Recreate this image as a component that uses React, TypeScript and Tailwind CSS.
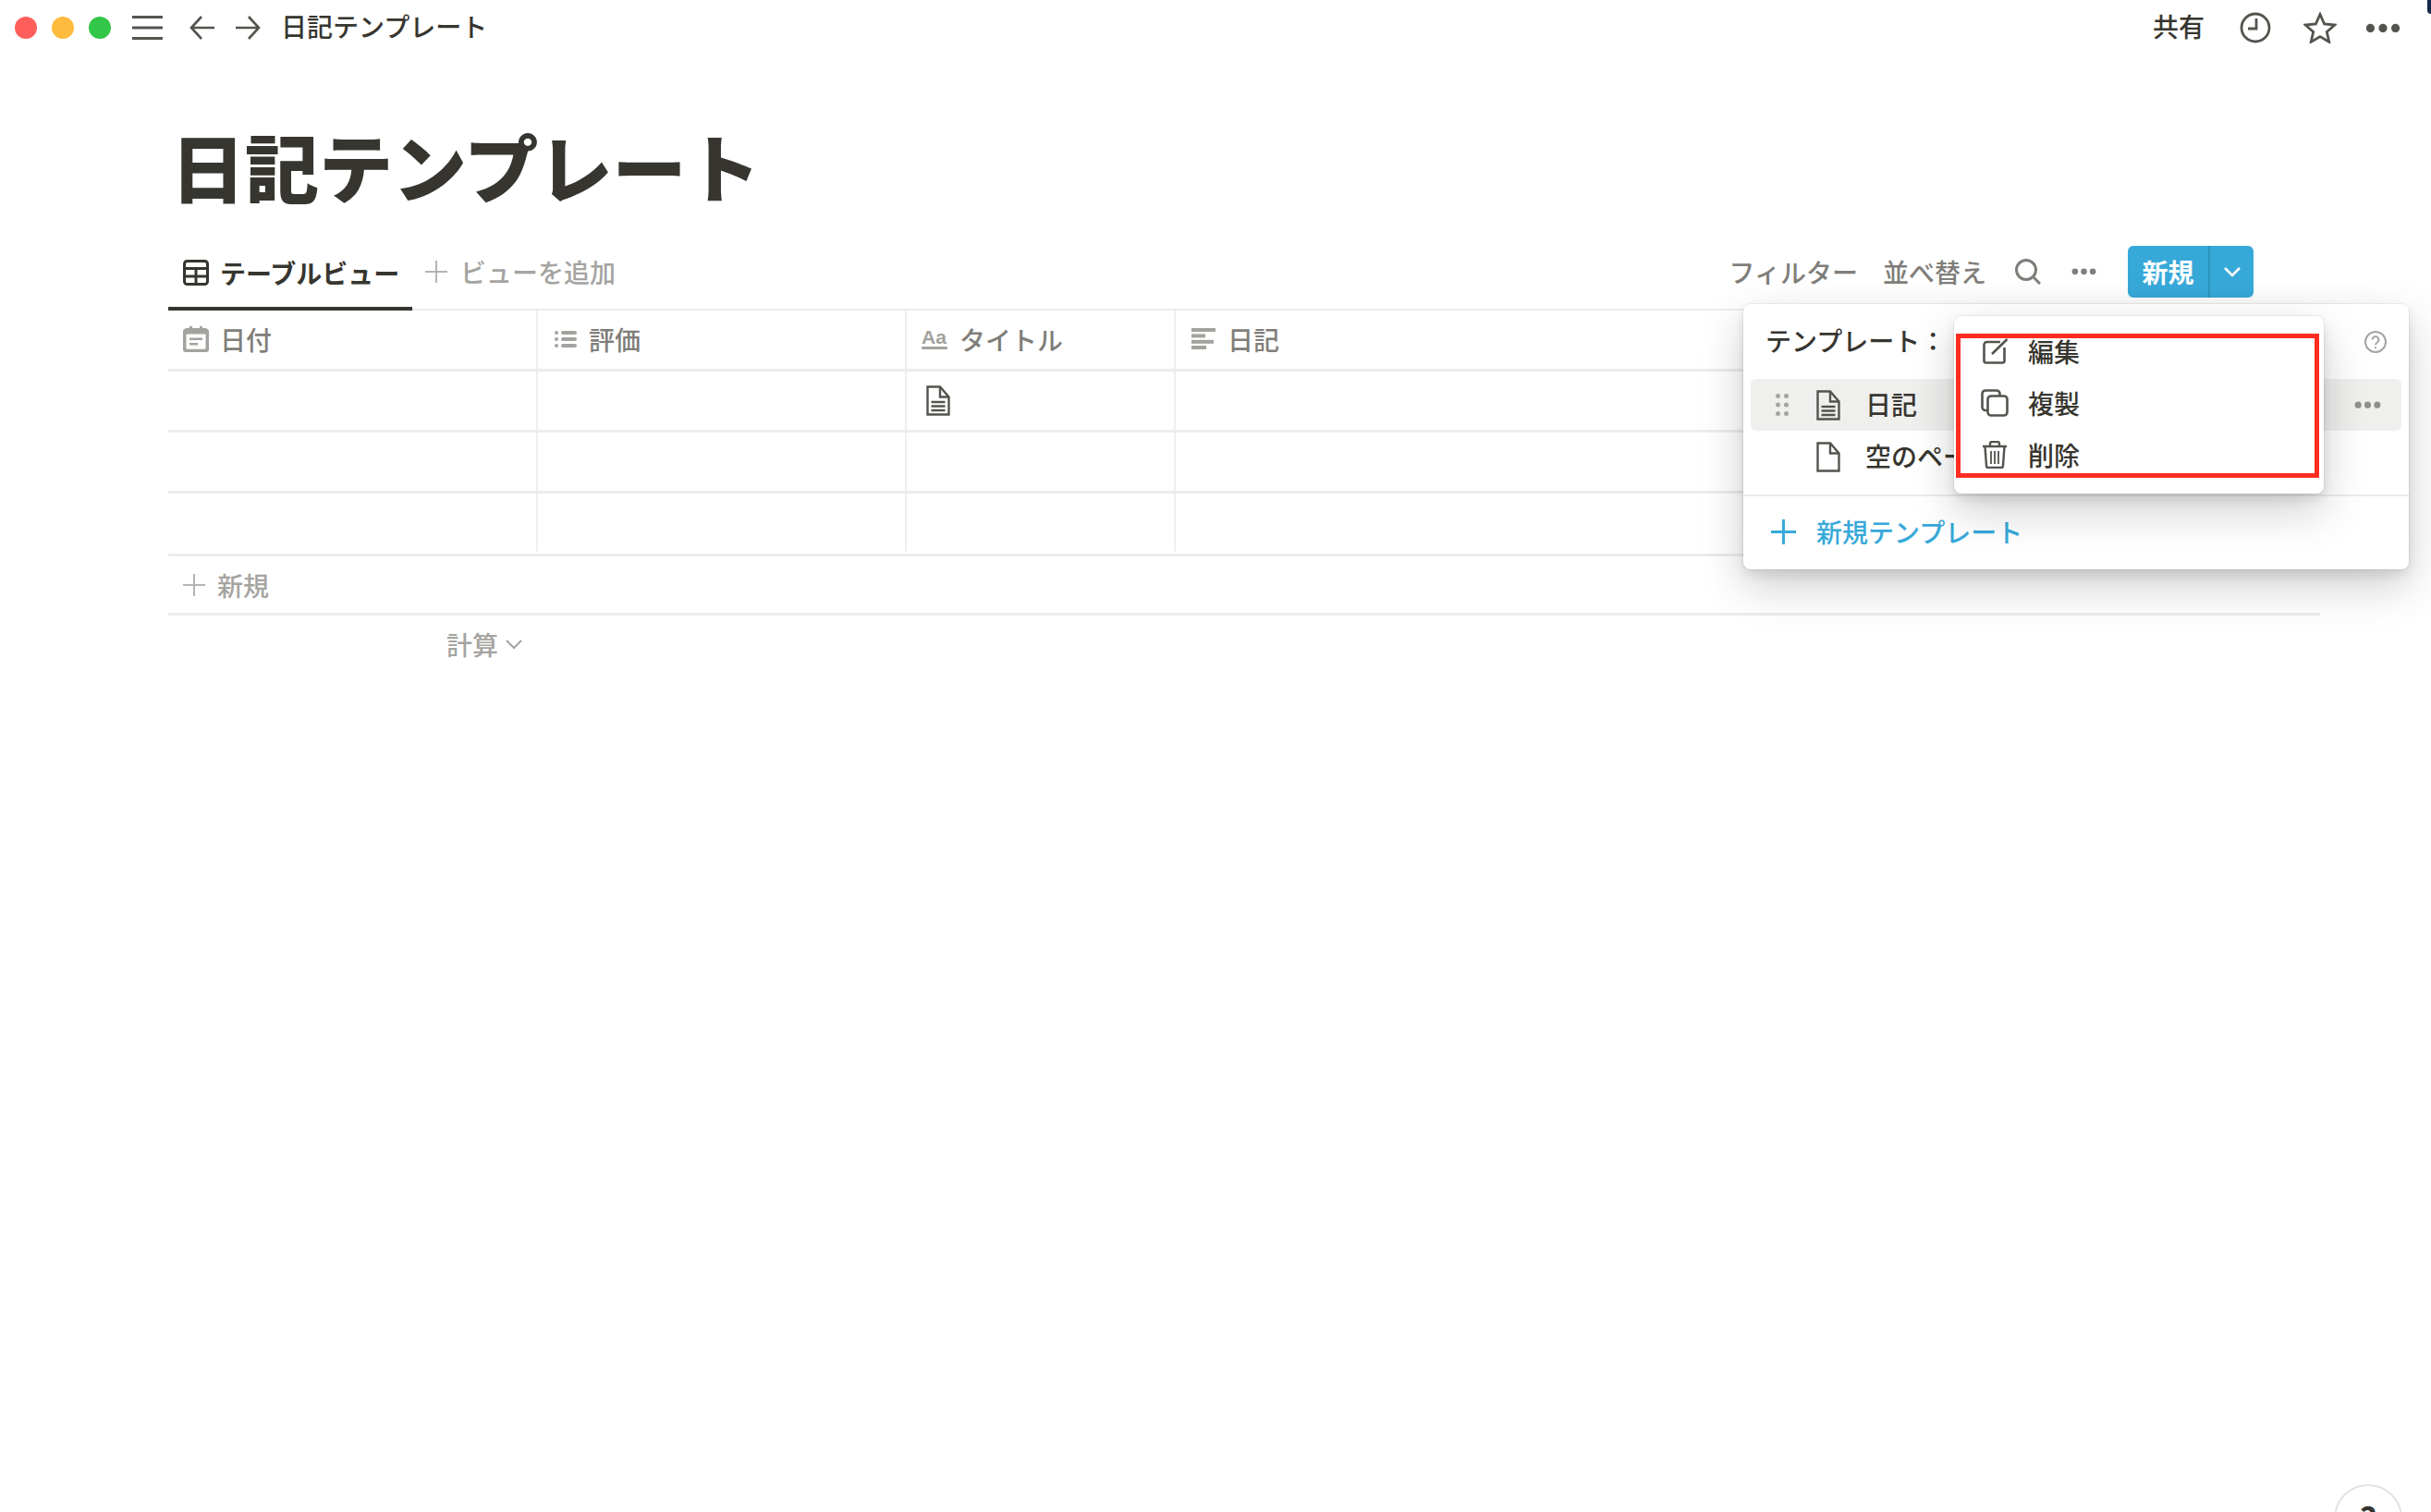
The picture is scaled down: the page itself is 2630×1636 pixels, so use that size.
const jp = "font-['Noto_Sans_CJK_JP','Noto_Sans',sans-serif]";

function PlusIcon({ size, width, color }: { size: number; width: number; color: string }) {
  return (
    <svg viewBox="0 0 24 24" width={size} height={size} className="shrink-0" fill="none" stroke={color} strokeWidth={width}>
      <path d="M0 12h24M12 0v24" />
    </svg>
  );
}

function ChevronIcon({ width, color }: { width: number; color: string }) {
  return (
    <svg viewBox="0 0 18 11" className="w-[18px] h-[11px] shrink-0" fill="none" stroke={color} strokeWidth={width}>
      <path d="M1 1l8 8 8-8" />
    </svg>
  );
}

function TableIcon() {
  return (
    <svg viewBox="0 0 28 28" className="w-[28px] h-[28px] shrink-0" fill="none" stroke="#37352f" strokeWidth="3">
      <rect x="1.5" y="1.5" width="25" height="25" rx="3" />
      <path d="M1.5 9.5h25M1.5 18h25M14 9.5v17" />
    </svg>
  );
}

function DotsIcon({ color, size }: { color: string; size: number }) {
  return (
    <svg viewBox="0 0 28 8" width={size} height={(size * 8) / 28} fill={color}>
      <circle cx="4" cy="4" r="3.4" />
      <circle cx="14" cy="4" r="3.4" />
      <circle cx="24" cy="4" r="3.4" />
    </svg>
  );
}

function DocIcon({ lines, className }: { lines?: boolean; className: string }) {
  return (
    <svg viewBox="0 0 26 33" className={className} fill="none" stroke="#55534e" strokeWidth="2.4">
      <path d="M1.5 1.5H15L24.5 12.5V31.5H1.5z" />
      <path d="M15 1.5V12.5H24.5" />
      {lines && <path d="M5.5 18H20.5M5.5 22.5H20.5M5.5 27H20.5" strokeWidth="2.4" />}
    </svg>
  );
}

function DateIcon() {
  return (
    <svg viewBox="0 0 28 28" className="w-[28px] h-[28px] shrink-0" fill="#a3a29e">
      <path d="M5 2h2V0h3v2h8V0h3v2h2a5 5 0 0 1 5 3v20a3 3 0 0 1-3 3H3a3 3 0 0 1-3-3V5a5 5 0 0 1 5-3z" />
      <path d="M3.5 8.5h21V24a.8.8 0 0 1-.8.8H4.3a.8.8 0 0 1-.8-.8z" fill="#fff" />
      <path d="M7 12.5h14v2.6H7zM7 18h9v2.6H7z" />
    </svg>
  );
}

function ListIcon() {
  return (
    <svg viewBox="0 0 24 20" className="w-[24px] h-[20px] shrink-0" fill="#a3a29e">
      <circle cx="2" cy="3" r="2" />
      <circle cx="2" cy="10" r="2" />
      <circle cx="2" cy="17" r="2" />
      <rect x="7" y="1" width="17" height="4" rx="2" />
      <rect x="7" y="8" width="17" height="4" rx="2" />
      <rect x="7" y="15" width="17" height="4" rx="2" />
    </svg>
  );
}

function TextIcon() {
  return (
    <svg viewBox="0 0 28 23" className="w-[28px] h-[23px] shrink-0" fill="#a3a29e">
      <text x="0" y="17" fontFamily="Liberation Sans, sans-serif" fontWeight="700" fontSize="21">
        Aa
      </text>
      <rect y="20" width="28" height="3" rx="1" />
    </svg>
  );
}

function LinesIcon() {
  return (
    <svg viewBox="0 0 26 23" className="w-[26px] h-[23px] shrink-0" fill="#a3a29e">
      <rect y="0" width="26" height="4" />
      <rect y="6.4" width="15" height="4" />
      <rect y="12.8" width="24" height="4" />
      <rect y="19" width="16" height="4" />
    </svg>
  );
}

function Column({ className, icon, label }: { className: string; icon: React.ReactNode; label: string }) {
  return (
    <div className={`${className} shrink-0 h-full pb-[2px] flex items-center`}>
      {icon}
      <span className="text-[28px] font-medium text-[#7f7e7a]">{label}</span>
    </div>
  );
}

function Row({ children, last }: { children?: React.ReactNode; last?: boolean }) {
  return (
    <div className={last ? "h-[63px] mb-[2px] flex" : "h-[66px] flex border-b-[3px] border-[#ececeb]"}>
      <div className="w-[400px] shrink-0 border-r-2 border-[#efefee]" />
      <div className="w-[399px] shrink-0 border-r-2 border-[#efefee]" />
      <div className="w-[291px] shrink-0 border-r-2 border-[#efefee] flex items-center pl-[21px]">{children}</div>
    </div>
  );
}

function MenuItem({ icon, label }: { icon: React.ReactNode; label: string }) {
  return (
    <div className="h-[56px] flex items-center pl-[29px] gap-[21px]">
      <div className="w-[30px] flex justify-center">{icon}</div>
      <span className="text-[28px] font-medium text-[#37352f] leading-none">{label}</span>
    </div>
  );
}

export default function App() {
  return (
    <div className={`relative w-[2630px] h-[1636px] overflow-hidden bg-white ${jp}`}>
      {/* Title bar */}
      <div className="h-[60px] flex items-center pl-[16px] pr-[33px]">
        <div className="flex gap-[16px]">
          <div className="w-[24px] h-[24px] rounded-full bg-[#ff5f5b]" />
          <div className="w-[24px] h-[24px] rounded-full bg-[#febb3e]" />
          <div className="w-[24px] h-[24px] rounded-full bg-[#32c748]" />
        </div>
        <svg viewBox="0 0 33 26" className="w-[33px] h-[26px] ml-[23px]" fill="#55534e">
          <rect width="33" height="3" />
          <rect y="11.5" width="33" height="3" />
          <rect y="23" width="33" height="3" />
        </svg>
        <svg viewBox="0 0 28 26" className="w-[28px] h-[26px] ml-[29px]" fill="none" stroke="#55534e" strokeWidth="2.6">
          <path d="M27 13H3M13 1 2 13l11 12" />
        </svg>
        <svg viewBox="0 0 28 26" className="w-[28px] h-[26px] ml-[21px]" fill="none" stroke="#55534e" strokeWidth="2.6">
          <path d="M1 13h24M15 1l11 12-11 12" />
        </svg>
        <span className="ml-[22px] mb-[4px] text-[28px] font-medium text-[#37352f]">日記テンプレート</span>
        <div className="ml-auto flex items-center">
          <span className="mb-[4px] text-[28px] font-medium text-[#37352f]">共有</span>
          <svg viewBox="0 0 34 34" className="w-[34px] h-[34px] ml-[38px]" fill="none" stroke="#55534e" strokeWidth="2.8">
            <circle cx="17" cy="17" r="15" />
            <path d="M18 7v11H9" />
          </svg>
          <svg viewBox="0 0 36 34" className="w-[36px] h-[34px] ml-[35px]" fill="none" stroke="#55534e" strokeWidth="2.8">
            <path d="M18 2.5l4.6 10.4 11.2 1.1-8.5 7.4 2.5 11-9.8-5.8-9.8 5.8 2.5-11L2.2 14l11.2-1.1z" />
          </svg>
          <div className="ml-[31px]">
            <DotsIcon color="#55534e" size={38} />
          </div>
        </div>
      </div>

      {/* Page body */}
      <div className="pl-[182px] pr-[120px]">
        <h1 className="mt-[78px] pl-[3px] text-[80px] leading-[80px] font-black text-[#37352f]">日記テンプレート</h1>

        <div className="mt-[50px] h-[68px] flex items-stretch border-b-2 border-[#ececeb]">
          <div className="w-[264px] h-[68px] pl-[16px] pb-[10px] flex items-center gap-[12px] border-b-4 border-[#37352f]">
            <TableIcon />
            <span className="text-[28px] font-bold text-[#37352f]">テーブルビュー</span>
          </div>
          <div className="ml-[14px] flex items-center gap-[14px] pb-[14px] text-[#a5a4a1]">
            <PlusIcon size={24} width={2} color="#b5b4b1" />
            <span className="text-[28px] font-medium">ビューを追加</span>
          </div>
          <div className="ml-auto flex items-center pb-[14px] pr-[72px]">
            <span className="text-[28px] font-medium text-[#7f7e7a]">フィルター</span>
            <span className="ml-[27px] text-[28px] font-medium text-[#7f7e7a]">並べ替え</span>
            <svg viewBox="0 0 28 28" className="w-[28px] h-[28px] ml-[31px]" fill="none" stroke="#7f7e7a" strokeWidth="3">
              <circle cx="12" cy="12" r="10.5" />
              <path d="M19.5 19.5 27 27" />
            </svg>
            <div className="ml-[33px]">
              <DotsIcon color="#7f7e7a" size={27} />
            </div>
            <div className="ml-[34px] w-[136px] h-[56px] rounded-[6px] bg-[#37a9d9] flex">
              <div className="w-[89px] flex items-center justify-center border-r-2 border-[#2c93bf] text-[28px] font-bold text-white">
                新規
              </div>
              <div className="flex-1 flex items-center justify-center">
                <ChevronIcon width={2.6} color="#fff" />
              </div>
            </div>
          </div>
        </div>

        {/* Table */}
        <div className="h-[66px] flex border-b-[3px] border-[#ececeb]">
          <Column className="w-[400px] pl-[16px] gap-[12px] border-r-2 border-[#efefee]" icon={<DateIcon />} label="日付" />
          <Column className="w-[399px] pl-[18px] gap-[13px] border-r-2 border-[#efefee]" icon={<ListIcon />} label="評価" />
          <Column className="w-[291px] pl-[16px] gap-[13px] border-r-2 border-[#efefee]" icon={<TextIcon />} label="タイトル" />
          <Column className="w-[300px] pl-[17px] gap-[13px]" icon={<LinesIcon />} label="日記" />
        </div>
        <Row>
          <DocIcon lines className="w-[26px] h-[33px]" />
        </Row>
        <Row />
        <Row last />
        <div className="border-t-[3px] h-[67px] flex items-center gap-[13px] pl-[16px] border-b-[3px] border-[#ececeb] text-[#a5a4a1]">
          <PlusIcon size={24} width={2} color="#b5b4b1" />
          <span className="text-[28px] font-medium">新規</span>
        </div>
        <div className="h-[62px] pl-[301px] flex items-center gap-[8px] text-[#a5a4a1]">
          <span className="text-[28px] font-medium">計算</span>
          <ChevronIcon width={2} color="#a5a4a1" />
        </div>
      </div>

      {/* Template popup */}
      <div className="absolute left-[1886px] top-[329px] w-[720px] h-[287px] rounded-[8px] bg-white shadow-[0_0_0_1px_rgba(15,15,15,0.05),0_6px_12px_rgba(15,15,15,0.1),0_18px_48px_rgba(15,15,15,0.2)]">
        <div className="h-[81px] pl-[24px] pr-[24px] flex items-center justify-between">
          <span className="mb-[3px] text-[28px] font-medium text-[#37352f]">テンプレート：</span>
          <svg viewBox="0 0 24 24" className="w-[24px] h-[24px]" fill="none" stroke="#a5a4a1" strokeWidth="2">
            <circle cx="12" cy="12" r="11" />
            <path d="M8.5 9.5a3.5 3.5 0 1 1 5.4 3c-1.2.8-1.9 1.4-1.9 2.8M12 17.2v2" />
          </svg>
        </div>
        <div className="mx-[8px] h-[56px] rounded-[6px] bg-[#efefee] flex items-center pl-[27px] pr-[22px]">
          <svg viewBox="0 0 14 24" className="w-[14px] h-[24px]" fill="#a5a4a1">
            <circle cx="2.5" cy="2.5" r="2.5" />
            <circle cx="11.5" cy="2.5" r="2.5" />
            <circle cx="2.5" cy="12" r="2.5" />
            <circle cx="11.5" cy="12" r="2.5" />
            <circle cx="2.5" cy="21.5" r="2.5" />
            <circle cx="11.5" cy="21.5" r="2.5" />
          </svg>
          <DocIcon lines className="ml-[30px] w-[26px] h-[33px]" />
          <span className="ml-[27px] mb-[2px] text-[28px] font-medium text-[#37352f]">日記</span>
          <div className="ml-auto">
            <DotsIcon color="#8f8e8a" size={29} />
          </div>
        </div>
        <div className="h-[56px] flex items-center pl-[79px]">
          <DocIcon className="w-[26px] h-[33px]" />
          <span className="ml-[27px] mb-[2px] text-[28px] font-medium text-[#37352f] whitespace-nowrap">空のページ</span>
        </div>
        <div className="mt-[13px] border-t-2 border-[#ececeb] h-[79px] flex items-center pl-[30px] text-[#37a9d9]">
          <PlusIcon size={27} width={2.6} color="#37a9d9" />
          <span className="ml-[22px] mb-[2px] text-[28px] font-medium">新規テンプレート</span>
        </div>
      </div>

      {/* Item menu */}
      <div className="absolute left-[2114px] top-[342px] w-[400px] h-[192px] rounded-[8px] bg-white pt-[10px] shadow-[0_0_0_1px_rgba(15,15,15,0.05),0_6px_12px_rgba(15,15,15,0.1),0_18px_48px_rgba(15,15,15,0.2)]">
        <MenuItem
          label="編集"
          icon={
            <svg viewBox="0 0 28 28" className="w-[28px] h-[28px] ml-[2px]" fill="none" stroke="#55534e" strokeWidth="2.6">
              <path d="M19 4H4.5A3 3 0 0 0 1.5 7v17.5a2 2 0 0 0 2 2h18a2 2 0 0 0 2-2V10M10 17 26.5 1" />
            </svg>
          }
        />
        <MenuItem
          label="複製"
          icon={
            <svg viewBox="0 0 30 30" className="w-[30px] h-[30px]" fill="none" stroke="#55534e" strokeWidth="2.6">
              <rect x="7.5" y="7.5" width="21" height="21" rx="3.5" />
              <path d="M7.5 23H5a3.5 3.5 0 0 1-3.5-3.5V5A3.5 3.5 0 0 1 5 1.5h12A3.5 3.5 0 0 1 20.5 5v2.5" />
            </svg>
          }
        />
        <MenuItem
          label="削除"
          icon={
            <svg viewBox="0 0 28 30" className="w-[28px] h-[30px]" fill="none" stroke="#55534e" strokeWidth="2.4">
              <path d="M1 6h26M9 6V3a2 2 0 0 1 2-2h6a2 2 0 0 1 2 2v3M3.5 6l1.5 21a2 2 0 0 0 2 2h14a2 2 0 0 0 2-2l1.5-21" />
              <path d="M10 11v14M14 11v14M18 11v14" strokeWidth="1.8" />
            </svg>
          }
        />
      </div>

      {/* Red annotation frame */}
      <div className="absolute left-[2116px] top-[361px] w-[393px] h-[156px] border-[5px] border-[#ff2d20]" />

      {/* Help button, cut off by the window bottom */}
      <div className="absolute left-[2525px] top-[1606px] w-[74px] h-[74px] rounded-full bg-white border-2 border-[#e3e3e2] flex justify-center pt-[8px] text-[36px] font-bold leading-[52px] text-[#37352f]">
        ?
      </div>

      {/* Dark corner of the desktop behind the window */}
      <div className="absolute right-0 top-0 w-[4px] h-[15px] rounded-bl-full bg-[#14284b]" />
    </div>
  );
}
